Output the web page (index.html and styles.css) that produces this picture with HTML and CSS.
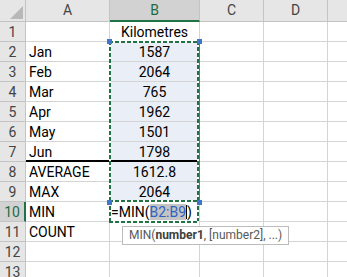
FILE: index.html
```html
<!DOCTYPE html>
<html lang="en">
<head>
    <meta charset="UTF-8">
    <title>Kilometres - Sheet1</title>
    <link rel="stylesheet" href="styles.css">
</head>
<body>
    <div class="sheet">
        <div class="grid">
            <div class="hd corner">
                <svg width="26" height="22" viewBox="0 0 26 22"><polygon points="10,19 23,19 23,6" fill="#b8b8b8"/></svg>
            </div>
            <div class="hd">A</div>
            <div class="hd sel-col">B</div>
            <div class="hd">C</div>
            <div class="hd">D</div>
            <div class="hd"></div>

            <div class="hd">1</div><div class="txt"></div><div class="mid">Kilometres</div><div></div><div></div><div></div>
            <div class="hd">2</div><div class="txt">Jan</div><div class="mid num">1587</div><div></div><div></div><div></div>
            <div class="hd">3</div><div class="txt">Feb</div><div class="mid num">2064</div><div></div><div></div><div></div>
            <div class="hd">4</div><div class="txt">Mar</div><div class="mid num">765</div><div></div><div></div><div></div>
            <div class="hd">5</div><div class="txt">Apr</div><div class="mid num">1962</div><div></div><div></div><div></div>
            <div class="hd">6</div><div class="txt">May</div><div class="mid num">1501</div><div></div><div></div><div></div>
            <div class="hd">7</div><div class="txt thick">Jun</div><div class="mid num thick">1798</div><div></div><div></div><div></div>
            <div class="hd">8</div><div class="txt">AVERAGE</div><div class="mid num">1612.8</div><div></div><div></div><div></div>
            <div class="hd">9</div><div class="txt">MAX</div><div class="mid num">2064</div><div></div><div></div><div></div>
            <div class="hd sel-row">10</div><div class="txt">MIN</div><div class="formula">=MIN(<span class="ref">B2:B9</span><span class="caret"></span>)</div><div></div><div></div><div></div>
            <div class="hd">11</div><div class="txt">COUNT</div><div></div><div></div><div></div><div></div>
            <div class="hd">12</div><div></div><div></div><div></div><div></div><div></div>
            <div class="hd">13</div><div></div><div></div><div></div><div></div><div></div>
        </div>

        <!-- range highlight + copy marquee -->
        <div class="range"></div>
        <div class="ants ants-range"></div>
        <div class="ants ants-cell"></div>
        <div class="handle h-tl"></div>
        <div class="handle h-tr"></div>
        <div class="handle h-bl"></div>
        <div class="handle h-br"></div>

        <div class="tip">MIN(<b>number1</b>, [number2], ...)</div>
    </div>
</body>
</html>
```

FILE: styles.css
```css
html, body {
    margin: 0;
    background: #fff;
    font-family: Roboto, 'Liberation Sans', sans-serif;
    font-size: 14px;
    overflow: hidden;
}
.sheet {
    position: relative;
    width: 347px;
    height: 277px;
    overflow: hidden;
}
.grid {
    display: grid;
    grid-template-columns: 26px 84px 90px 64px 64px 40px;
    grid-template-rows: 22px repeat(13, 20px);
}
.grid > div {
    box-sizing: border-box;
    border-right: 1px solid #d4d4d4;
    border-bottom: 1px solid #d4d4d4;
    line-height: 19px;
    padding-top: 1px;
    white-space: nowrap;
    overflow: hidden;
    color: #000;
}
.grid > .hd {
    background: #e6e6e6;
    color: #444;
    text-align: center;
    border-color: #c4c4c4;
}
.grid > .corner {
    padding: 0;
}
.corner svg {
    display: block;
}
.grid > .sel-col {
    background: #d2d2d2;
    color: #1e6b40;
    border-bottom: 2px solid #217346;
}
.grid > .sel-row {
    background: #d2d2d2;
    color: #1e6b40;
    border-right: 2px solid #217346;
}
.txt {
    padding-left: 3px;
}
.mid {
    text-align: center;
}
.num {
    background: #e9eef7;
}
.grid > .thick {
    border-bottom: 2px solid #000;
}
.formula {
    padding-left: 1px;
}
.ref {
    color: #2e62c0;
    background: #c4c4c4;
}
.caret {
    display: inline-block;
    width: 0;
    height: 14px;
    border-left: 1px solid #000;
    vertical-align: -2px;
}
.range {
    position: absolute;
    left: 109px;
    top: 41px;
    width: 89px;
    height: 159px;
    border: 1px solid #4472c4;
}
.ants {
    position: absolute;
    left: 109px;
    width: 90px;
    background:
        repeating-linear-gradient(90deg, #217346 0 4px, #fff 4px 6px) top / 100% 2px no-repeat,
        repeating-linear-gradient(90deg, #217346 0 4px, #fff 4px 6px) bottom / 100% 2px no-repeat,
        repeating-linear-gradient(180deg, #217346 0 4px, #fff 4px 6px) left / 2px 100% no-repeat,
        repeating-linear-gradient(180deg, #217346 0 4px, #fff 4px 6px) right / 2px 100% no-repeat;
}
.ants-range {
    top: 41px;
    height: 161px;
}
.ants-cell {
    top: 200px;
    height: 23px;
}
.handle {
    position: absolute;
    width: 5px;
    height: 5px;
    background: #3f76cc;
}
.h-tl { left: 107px; top: 39px; }
.h-tr { left: 197px; top: 39px; }
.h-bl { left: 107px; top: 200px; }
.h-br { left: 197px; top: 200px; }
.tip {
    position: absolute;
    left: 122px;
    top: 226px;
    height: 17px;
    padding: 0 6px;
    border: 1px solid #bcbcbc;
    background: #fff;
    color: #595959;
    font-size: 12px;
    line-height: 17px;
    white-space: nowrap;
}
.tip b {
    color: #404040;
}
```
